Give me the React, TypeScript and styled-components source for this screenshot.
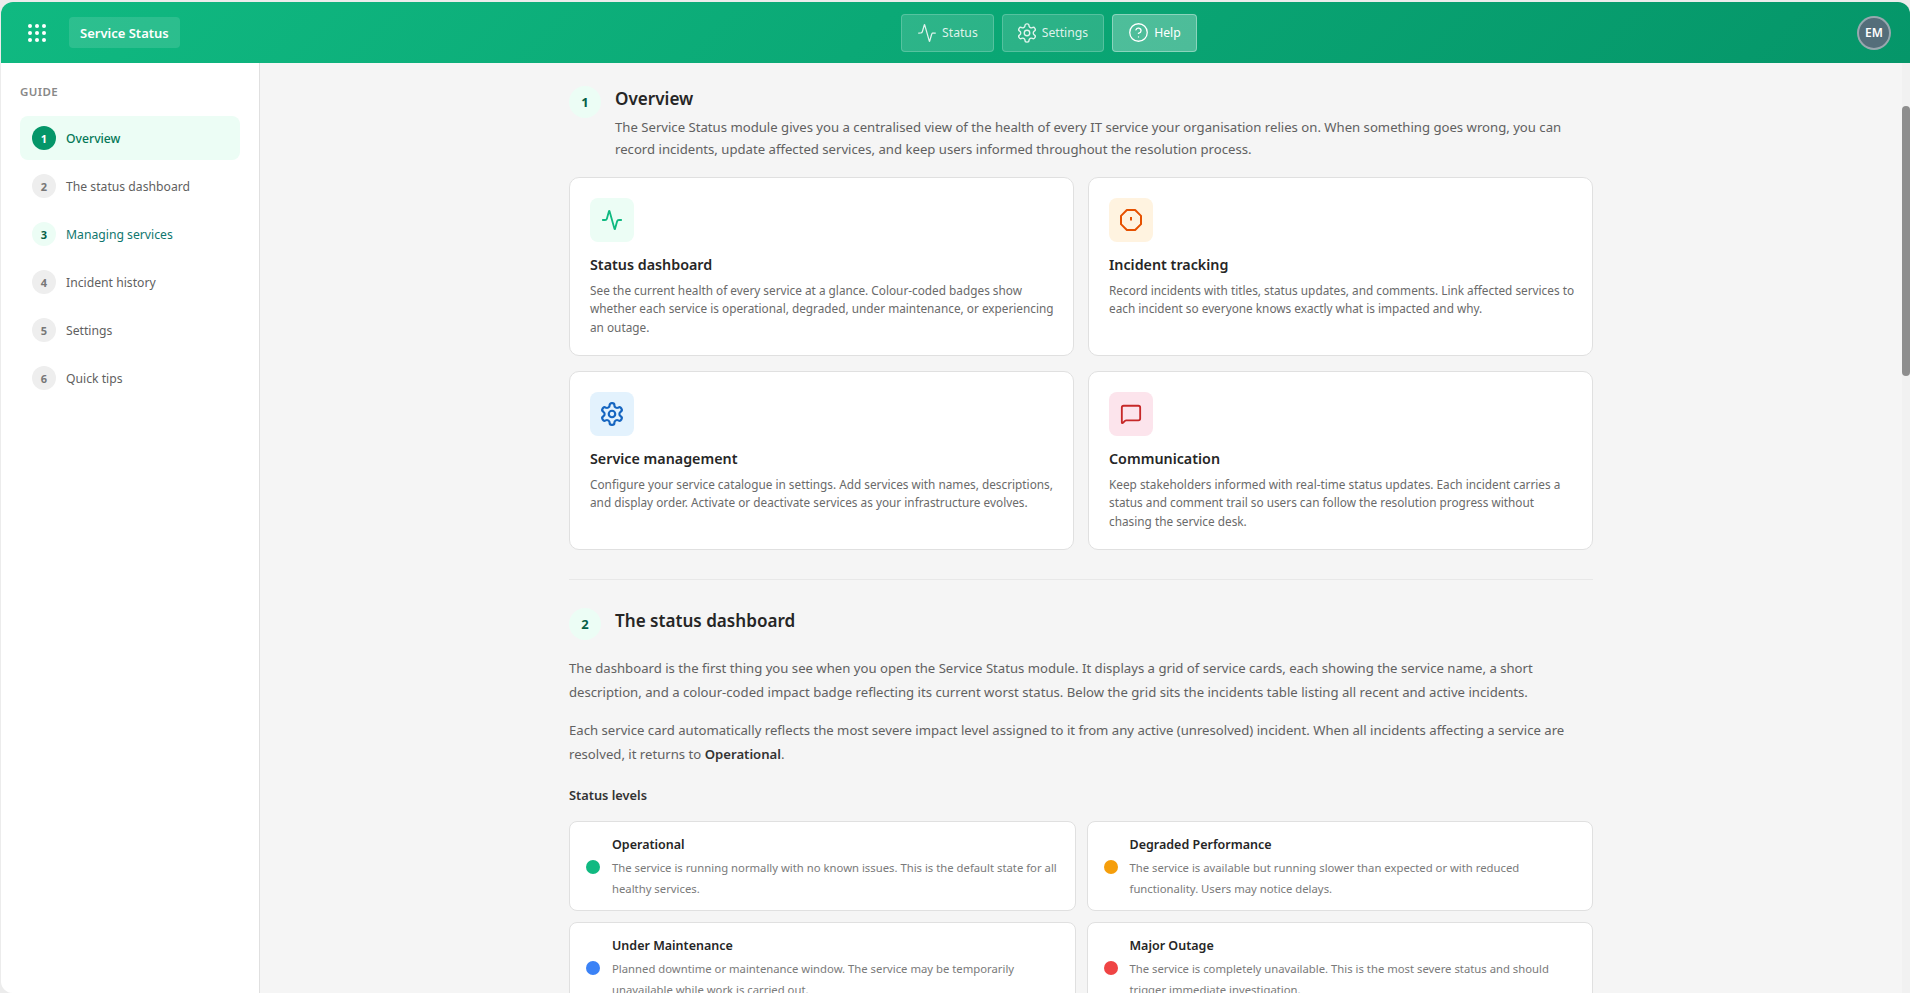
import React from 'react';
import styled, { createGlobalStyle } from 'styled-components';
import { Activity, CircleHelp, MessageSquare } from 'lucide-react';

const GlobalStyle = createGlobalStyle`
  html, body, #root {
    margin: 0;
    height: 100%;
    overflow: hidden;
  }
  body {
    background: #ececec;
    font-family: "Noto Sans", "Open Sans", sans-serif;
    color: #222;
  }
  * { box-sizing: border-box; }
`;

const Frame = styled.div`
  height: 100%;
  padding: 2px 0 0 1px;
  display: flex;
`;

const Shell = styled.div`
  flex: 1;
  min-width: 0;
  display: flex;
  flex-direction: column;
  border-radius: 12px 12px 0 12px;
  overflow: hidden;
  background: #f5f5f5;
`;

const TopBar = styled.header`
  height: 61px;
  flex: none;
  display: flex;
  align-items: center;
  padding: 0 19px 0 27px;
  background: linear-gradient(135deg, #10b981 0%, #059669 100%);
`;

const BarLeft = styled.div`
  display: flex;
  align-items: center;
  gap: 23px;
  margin-right: 61px;
`;

const Launcher = styled.div`
  display: grid;
  grid-template-columns: repeat(3, 4px);
  gap: 3px;
`;

const LauncherDot = styled.span`
  width: 4px;
  height: 4px;
  border-radius: 50%;
  background: #fff;
`;

const ModuleChip = styled.div`
  height: 31px;
  padding: 0 11px;
  display: flex;
  align-items: center;
  border-radius: 4px;
  background: rgba(255, 255, 255, 0.12);
  color: #fff;
  font-size: 13px;
  font-weight: 600;
`;

const BarNav = styled.nav`
  flex: 1;
  display: flex;
  justify-content: center;
  gap: 8px;
`;

const NavButton = styled.div<{ $active?: boolean }>`
  height: 38px;
  padding: 0 15px;
  display: flex;
  align-items: center;
  gap: 5px;
  border-radius: 4px;
  border: 1px solid rgba(255, 255, 255, ${p => (p.$active ? 0.35 : 0.2)});
  background: rgba(255, 255, 255, ${p => (p.$active ? 0.28 : 0.14)});
  color: ${p => (p.$active ? '#fff' : 'rgba(255, 255, 255, 0.85)')};
  font-size: 12.2px;
  font-weight: 400;
`;

const NavGear = styled.span`
  display: flex;
  margin: 0 -1.5px;
`;

const Avatar = styled.div`
  width: 34px;
  height: 34px;
  display: flex;
  align-items: center;
  justify-content: center;
  border-radius: 50%;
  border: 2px solid rgba(255, 255, 255, 0.4);
  background: #546e7a;
  color: #fff;
  font-size: 12px;
  font-weight: 600;
`;

const Body = styled.div`
  flex: 1;
  min-height: 0;
  display: flex;
`;

const Sidebar = styled.aside`
  width: 259px;
  flex: none;
  padding: 21px 19px 0;
  background: #fff;
  border-right: 1px solid #e0e0e0;
`;

const SideTitle = styled.div`
  margin-bottom: 17px;
  color: #888;
  font-size: 11.5px;
  font-weight: 600;
  letter-spacing: 0.4px;
`;

const SideList = styled.div`
  display: flex;
  flex-direction: column;
  gap: 4px;
`;

const SideItem = styled.div<{ $active?: boolean; $seen?: boolean }>`
  height: 44px;
  padding: 0 12px;
  display: flex;
  align-items: center;
  gap: 10px;
  border-radius: 8px;
  background: ${p => (p.$active ? '#ecfdf5' : 'transparent')};
  color: ${p => (p.$active ? '#047857' : p.$seen ? '#0f766e' : '#5f5f5f')};
  font-size: 12.2px;
  font-weight: ${p => (p.$active ? 500 : 400)};
`;

const SideNumber = styled.span<{ $active?: boolean; $seen?: boolean }>`
  width: 24px;
  height: 24px;
  flex: none;
  display: flex;
  align-items: center;
  justify-content: center;
  border-radius: 50%;
  background: ${p => (p.$active ? '#059669' : p.$seen ? '#ecfdf5' : '#eee')};
  color: ${p => (p.$active ? '#fff' : p.$seen ? '#065f46' : '#777')};
  font-size: 11px;
  font-weight: 700;
`;

const Main = styled.main`
  flex: 1;
  min-width: 0;
  overflow: hidden;
`;

const ScrollTrack = styled.div`
  width: 8px;
  flex: none;
  padding-top: 43px;
  background: #f1f1f1;
`;

const ScrollThumb = styled.div`
  height: 270px;
  border-radius: 4px;
  background: #8e8e8e;
`;

const Content = styled.div`
  width: 1024px;
  margin: 0 auto;
  padding-top: 23px;
`;

const SectionHead = styled.div`
  display: flex;
  gap: 14px;
`;

const SectionNumber = styled.span`
  width: 32px;
  height: 32px;
  flex: none;
  display: flex;
  align-items: center;
  justify-content: center;
  border-radius: 50%;
  background: #ecfdf5;
  color: #065f46;
  font-size: 13px;
  font-weight: 700;
`;

const SectionTitle = styled.h2`
  margin: 0;
  padding-top: 2px;
  font-size: 17.1px;
  line-height: 22px;
  font-weight: 600;
  color: #262626;
`;

const Intro = styled.p`
  margin: 6px 0 0;
  color: #616161;
  font-size: 13.15px;
  line-height: 22.3px;
`;

const FeatureGrid = styled.div`
  margin-top: 16px;
  display: grid;
  grid-template-columns: 1fr 1fr;
  gap: 15px 14px;
`;

const FeatureCard = styled.div`
  height: 179px;
  padding: 20px 14px 20px 20px;
  background: #fff;
  border: 1px solid #e0e0e0;
  border-radius: 10px;
`;

const FeatureIcon = styled.div<{ $bg: string; $fg: string }>`
  width: 44px;
  height: 44px;
  display: flex;
  align-items: center;
  justify-content: center;
  border-radius: 8px;
  background: ${p => p.$bg};
  color: ${p => p.$fg};
`;

const FeatureTitle = styled.h3`
  margin: 12px 0 5px;
  font-size: 14.3px;
  line-height: 22px;
  font-weight: 600;
  color: #262626;
`;

const FeatureText = styled.p`
  margin: 0;
  color: #6a6a6a;
  font-size: 11.8px;
  line-height: 18.6px;
`;

const Divider = styled.hr`
  margin: 29px 0 0;
  border: 0;
  border-top: 1px solid #e8e8e8;
`;

const SecondHead = styled(SectionHead)`
  margin-top: 28px;
`;

const BodyText = styled.p`
  margin: 14px 0 0;
  color: #616161;
  font-size: 13.15px;
  line-height: 24px;
  strong {
    color: #333;
    font-weight: 600;
  }
`;

const LeadText = styled(BodyText)`
  margin-top: 16px;
`;

const SubTitle = styled.h4`
  margin: 19px 0 0;
  font-size: 12.8px;
  line-height: 20px;
  font-weight: 600;
  color: #333;
`;

const LevelGrid = styled.div`
  margin-top: 16px;
  display: grid;
  grid-template-columns: 1fr 1fr;
  gap: 11px;
`;

const LevelCard = styled.div`
  height: 90px;
  padding: 0 12px 0 16px;
  display: flex;
  align-items: center;
  gap: 12px;
  background: #fff;
  border: 1px solid #e0e0e0;
  border-radius: 8px;
`;

const LevelDot = styled.span<{ $color: string }>`
  width: 14px;
  height: 14px;
  flex: none;
  margin-top: 2px;
  border-radius: 50%;
  background: ${p => p.$color};
`;

const LevelBody = styled.div`
  padding-top: 3px;
`;

const LevelTitle = styled.div`
  font-size: 12.5px;
  line-height: 20px;
  font-weight: 600;
  color: #262626;
`;

const LevelText = styled.div`
  margin-top: 2px;
  color: #7a7a7a;
  font-size: 11.3px;
  line-height: 21px;
`;

// the gear in the reference is the wider, older lucide outline
const GearIcon = ({ size, strokeWidth = 2 }: { size: number; strokeWidth?: number }) => (
  <svg width={size} height={size} viewBox="0 0 24 24" fill="none" stroke="currentColor" strokeWidth={strokeWidth} strokeLinecap="round" strokeLinejoin="round">
    <path d="M12.22 2h-.44a2 2 0 0 0-2 2v.18a2 2 0 0 1-1 1.73l-.43.25a2 2 0 0 1-2 0l-.15-.08a2 2 0 0 0-2.73.73l-.22.38a2 2 0 0 0 .73 2.73l.15.1a2 2 0 0 1 1 1.72v.51a2 2 0 0 1-1 1.74l-.15.09a2 2 0 0 0-.73 2.73l.22.38a2 2 0 0 0 2.73.73l.15-.08a2 2 0 0 1 2 0l.43.25a2 2 0 0 1 1 1.73V20a2 2 0 0 0 2 2h.44a2 2 0 0 0 2-2v-.18a2 2 0 0 1 1-1.73l.43-.25a2 2 0 0 1 2 0l.15.08a2 2 0 0 0 2.73-.73l.22-.39a2 2 0 0 0-.73-2.73l-.15-.08a2 2 0 0 1-1-1.74v-.5a2 2 0 0 1 1-1.74l.15-.09a2 2 0 0 0 .73-2.73l-.22-.38a2 2 0 0 0-2.73-.73l-.15.08a2 2 0 0 1-2 0l-.43-.25a2 2 0 0 1-1-1.73V4a2 2 0 0 0-2-2z" />
    <circle cx="12" cy="12" r="3" />
  </svg>
);

const OctagonTick = () => (
  <svg width={24} height={24} viewBox="0 0 24 24" fill="none" stroke="currentColor" strokeWidth={2} strokeLinejoin="round">
    <path d="M7.86 2h8.28L22 7.86v8.28L16.14 22H7.86L2 16.14V7.86z" />
    <line x1="12" y1="9" x2="12" y2="12.5" />
  </svg>
);

const guide = ['Overview', 'The status dashboard', 'Managing services', 'Incident history', 'Settings', 'Quick tips'];

const features = [
  {
    icon: <Activity size={22} />, bg: '#ecfdf5', fg: '#10b981', title: 'Status dashboard',
    text: 'See the current health of every service at a glance. Colour-coded badges show whether each service is operational, degraded, under maintenance, or experiencing an outage.',
  },
  {
    icon: <OctagonTick />, bg: '#fff3e0', fg: '#e65100', title: 'Incident tracking',
    text: 'Record incidents with titles, status updates, and comments. Link affected services to each incident so everyone knows exactly what is impacted and why.',
  },
  {
    icon: <GearIcon size={26} />, bg: '#e3f2fd', fg: '#1565c0', title: 'Service management',
    text: 'Configure your service catalogue in settings. Add services with names, descriptions, and display order. Activate or deactivate services as your infrastructure evolves.',
  },
  {
    icon: <MessageSquare size={22} />, bg: '#fce4ec', fg: '#c62828', title: 'Communication',
    text: 'Keep stakeholders informed with real-time status updates. Each incident carries a status and comment trail so users can follow the resolution progress without chasing the service desk.',
  },
];

const levels = [
  { color: '#10b981', title: 'Operational', text: 'The service is running normally with no known issues. This is the default state for all healthy services.' },
  { color: '#f59e0b', title: 'Degraded Performance', text: 'The service is available but running slower than expected or with reduced functionality. Users may notice delays.' },
  { color: '#3b82f6', title: 'Under Maintenance', text: 'Planned downtime or maintenance window. The service may be temporarily unavailable while work is carried out.' },
  { color: '#ef4444', title: 'Major Outage', text: 'The service is completely unavailable. This is the most severe status and should trigger immediate investigation.' },
];

export default function App() {
  return (
    <>
      <GlobalStyle />
      <Frame>
        <Shell>
          <TopBar>
            <BarLeft>
              <Launcher>
                {Array.from({ length: 9 }).map((_, i) => <LauncherDot key={i} />)}
              </Launcher>
              <ModuleChip>Service Status</ModuleChip>
            </BarLeft>
            <BarNav>
              <NavButton><Activity size={20} strokeWidth={1.5} />Status</NavButton>
              <NavButton><NavGear><GearIcon size={22} strokeWidth={1.5} /></NavGear>Settings</NavButton>
              <NavButton $active><CircleHelp size={21} strokeWidth={1.5} />Help</NavButton>
            </BarNav>
            <Avatar>EM</Avatar>
          </TopBar>
          <Body>
            <Sidebar>
              <SideTitle>GUIDE</SideTitle>
              <SideList>
                {guide.map((label, i) => (
                  <SideItem key={label} $active={i === 0} $seen={i === 2}>
                    <SideNumber $active={i === 0} $seen={i === 2}>{i + 1}</SideNumber>
                    {label}
                  </SideItem>
                ))}
              </SideList>
            </Sidebar>
            <Main>
              <Content>
                <SectionHead>
                  <SectionNumber>1</SectionNumber>
                  <div>
                    <SectionTitle>Overview</SectionTitle>
                    <Intro>
                      The Service Status module gives you a centralised view of the health of every IT service your organisation relies on. When something goes wrong, you can record incidents, update affected services, and keep users informed throughout the resolution process.
                    </Intro>
                  </div>
                </SectionHead>
                <FeatureGrid>
                  {features.map(f => (
                    <FeatureCard key={f.title}>
                      <FeatureIcon $bg={f.bg} $fg={f.fg}>{f.icon}</FeatureIcon>
                      <FeatureTitle>{f.title}</FeatureTitle>
                      <FeatureText>{f.text}</FeatureText>
                    </FeatureCard>
                  ))}
                </FeatureGrid>
                <Divider />
                <SecondHead>
                  <SectionNumber>2</SectionNumber>
                  <SectionTitle>The status dashboard</SectionTitle>
                </SecondHead>
                <LeadText>
                  The dashboard is the first thing you see when you open the Service Status module. It displays a grid of service cards, each showing the service name, a short description, and a colour-coded impact badge reflecting its current worst status. Below the grid sits the incidents table listing all recent and active incidents.
                </LeadText>
                <BodyText>
                  Each service card automatically reflects the most severe impact level assigned to it from any active (unresolved) incident. When all incidents affecting a service are resolved, it returns to <strong>Operational</strong>.
                </BodyText>
                <SubTitle>Status levels</SubTitle>
                <LevelGrid>
                  {levels.map(l => (
                    <LevelCard key={l.title}>
                      <LevelDot $color={l.color} />
                      <LevelBody>
                        <LevelTitle>{l.title}</LevelTitle>
                        <LevelText>{l.text}</LevelText>
                      </LevelBody>
                    </LevelCard>
                  ))}
                </LevelGrid>
              </Content>
            </Main>
            <ScrollTrack>
              <ScrollThumb />
            </ScrollTrack>
          </Body>
        </Shell>
      </Frame>
    </>
  );
}
